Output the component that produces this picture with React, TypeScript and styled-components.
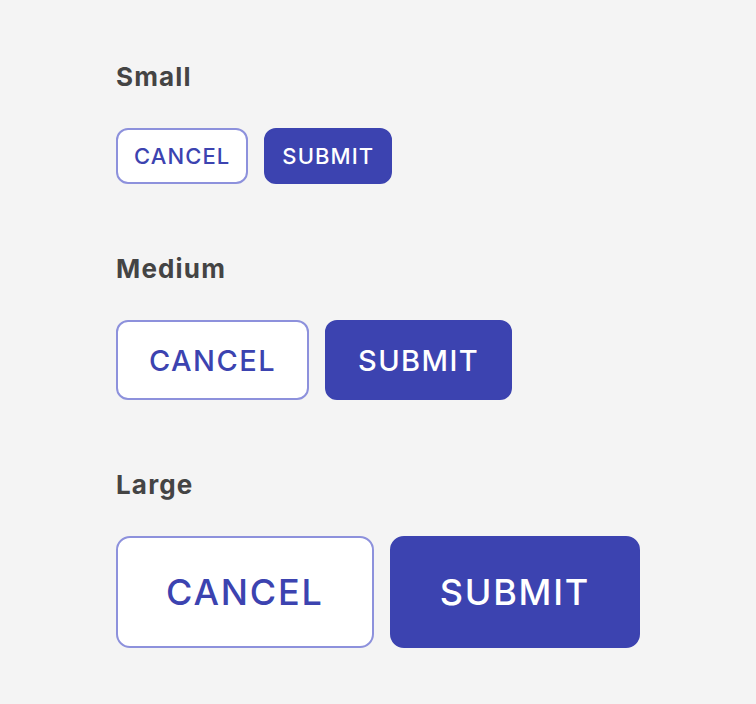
import * as React from 'react';
import styled, { createGlobalStyle, css } from 'styled-components';

type Size = 'small' | 'medium' | 'large';

const sizes: Record<Size, { height: number; padding: number; font: number; radius: number }> = {
  small: { height: 56, padding: 16, font: 22, radius: 12 },
  medium: { height: 80, padding: 31, font: 29, radius: 12 },
  large: { height: 112, padding: 48, font: 36, radius: 14 },
};

const groups: Array<{ label: string; size: Size }> = [
  { label: 'Small', size: 'small' },
  { label: 'Medium', size: 'medium' },
  { label: 'Large', size: 'large' },
];

const App = () => (
  <>
    <GlobalStyle />
    <Page>
      {groups.map(({ label, size }) => (
        <Section key={size}>
          <Heading>{label}</Heading>
          <ButtonRow>
            <Button $size={size} $variant="outline">
              CANCEL
            </Button>
            <Button $size={size} $variant="solid">
              SUBMIT
            </Button>
          </ButtonRow>
        </Section>
      ))}
    </Page>
  </>
);

export default App;

const GlobalStyle = createGlobalStyle`
  html,
  body {
    margin: 0;
    padding: 0;
    background: #f4f4f4;
  }

  body {
    font-family: Inter, 'Liberation Sans', sans-serif;
  }
`;

const Page = styled.main`
  display: flex;
  flex-direction: column;
  gap: 67px;
  padding: 59px 0 0 116px;
  min-height: 704px;
  box-sizing: border-box;
`;

const Section = styled.section`
  display: flex;
  flex-direction: column;
  gap: 33px;
`;

const Heading = styled.h2`
  margin: 0;
  font-size: 26px;
  line-height: 36px;
  font-weight: 700;
  color: #444444;
  letter-spacing: 0.045em;
`;

const ButtonRow = styled.div`
  display: flex;
  gap: 16px;
`;

const Button = styled.button<{ $size: Size; $variant: 'outline' | 'solid' }>`
  display: inline-flex;
  align-items: center;
  justify-content: center;
  box-sizing: border-box;
  font-family: Inter, 'Liberation Sans', sans-serif;
  font-weight: 500;
  letter-spacing: 0.05em;
  cursor: pointer;
  height: ${({ $size }) => sizes[$size].height}px;
  padding: 0 ${({ $size }) => sizes[$size].padding}px;
  font-size: ${({ $size }) => sizes[$size].font}px;
  border-radius: ${({ $size }) => sizes[$size].radius}px;

  ${({ $variant }) =>
    $variant === 'outline'
      ? css`
          background: #ffffff;
          color: #3c43b0;
          border: 2px solid #8d91dc;
        `
      : css`
          background: #3c43b0;
          color: #ffffff;
          border: 2px solid #3c43b0;
        `}
`;
